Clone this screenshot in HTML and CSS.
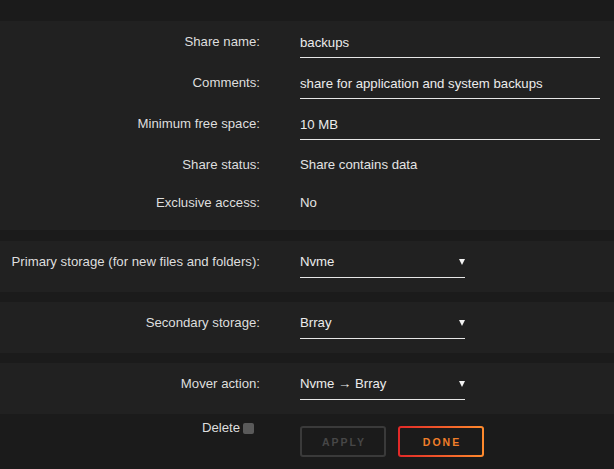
FILE: index.html
```html
<!DOCTYPE html>
<html lang="en">

<head>
    <meta charset="UTF-8">
    <meta name="viewport" content="width=device-width, initial-scale=1.0">
    <title>Share Settings</title>
    <link rel="stylesheet" href="styles.css">
</head>

<body>
    <div class="topbar"></div>

    <div class="section section-first">
        <div class="row">
            <label class="label" for="shareName">Share name:</label>
            <input class="field" type="text" id="shareName" value="backups">
        </div>
        <div class="row">
            <label class="label" for="comments">Comments:</label>
            <input class="field" type="text" id="comments" value="share for application and system backups">
        </div>
        <div class="row">
            <label class="label" for="freeSpace">Minimum free space:</label>
            <input class="field" type="text" id="freeSpace" value="10 MB">
        </div>
        <div class="row row-text">
            <span class="label">Share status:</span>
            <span class="value">Share contains data</span>
        </div>
        <div class="row row-text">
            <span class="label">Exclusive access:</span>
            <span class="value">No</span>
        </div>
    </div>

    <div class="section">
        <div class="row">
            <label class="label" for="primary">Primary storage (for new files and folders):</label>
            <div class="select" id="primary">
                <span>Nvme</span>
                <span class="arrow"></span>
            </div>
        </div>
    </div>

    <div class="section">
        <div class="row">
            <label class="label" for="secondary">Secondary storage:</label>
            <div class="select" id="secondary">
                <span>Brray</span>
                <span class="arrow"></span>
            </div>
        </div>
    </div>

    <div class="section section-last">
        <div class="row">
            <label class="label" for="mover">Mover action:</label>
            <div class="select" id="mover">
                <span>Nvme &rarr; Brray</span>
                <span class="arrow"></span>
            </div>
        </div>
    </div>

    <div class="actions">
        <div class="label delete">
            <span>Delete</span>
            <span class="checkbox"></span>
        </div>
        <div class="buttons">
            <button class="btn btn-apply" disabled>Apply</button>
            <button class="btn btn-done">Done</button>
        </div>
    </div>
</body>

</html>
```

FILE: styles.css
```css
body {
    font-family: "Liberation Sans", Arial, sans-serif;
    font-size: 13.2px;
    color: #e4e4e4;
    background-color: #1b1b1b;
    margin: 0;
    padding: 0;
}

.topbar {
    height: 21px;
}

.section {
    background-color: #212121;
    padding-top: 10px;
    margin-bottom: 10px;
}

.section-first {
    margin-bottom: 11px;
}

.section-last {
    margin-bottom: 0;
}

.row {
    display: flex;
    align-items: flex-start;
    height: 41px;
}

.row-text {
    height: 38px;
}

.label {
    width: 260px;
    flex-shrink: 0;
    text-align: right;
    line-height: 22px;
    margin-right: 40px;
    color: #dedede;
}

.value {
    line-height: 22px;
}

.field {
    width: 300px;
    box-sizing: border-box;
    background: transparent;
    border: none;
    border-bottom: 1px solid #e6e6e6;
    color: #ececec;
    font-family: inherit;
    font-size: 13.2px;
    line-height: 22px;
    height: 27px;
    padding: 0 0 4px 0;
    margin: 0;
    outline: none;
}

.select {
    width: 165px;
    box-sizing: border-box;
    height: 27px;
    line-height: 22px;
    border-bottom: 1px solid #e6e6e6;
    display: flex;
    justify-content: space-between;
    align-items: flex-start;
    color: #ececec;
}

.arrow {
    width: 0;
    height: 0;
    margin-top: 8px;
    margin-right: 0;
    border-left: 3px solid transparent;
    border-right: 3px solid transparent;
    border-top: 6px solid #f2f2f2;
}

.actions {
    display: flex;
    align-items: flex-start;
    padding-top: 4px;
}

.delete {
    display: flex;
    justify-content: flex-end;
    align-items: center;
    gap: 3px;
    line-height: 20px;
}

.checkbox {
    width: 11px;
    height: 11px;
    border-radius: 2px;
    background-color: #5a5a5a;
    margin-right: 6px;
}

.buttons {
    display: flex;
    gap: 12px;
    padding-top: 8px;
}

.btn {
    width: 86px;
    height: 31px;
    box-sizing: border-box;
    font-family: inherit;
    font-size: 10.5px;
    font-weight: bold;
    letter-spacing: 2px;
    text-transform: uppercase;
    border-radius: 3px;
    cursor: pointer;
    padding: 0 0 0 2px;
}

.btn-apply {
    background: transparent;
    border: 2px solid #3a3a3a;
    color: #474747;
}

.btn-done {
    border: 2px solid transparent;
    background:
        linear-gradient(#1b1b1b, #1b1b1b) padding-box,
        linear-gradient(90deg, #e22828, #ff8b2d) border-box;
    color: #f07f2a;
}
```
